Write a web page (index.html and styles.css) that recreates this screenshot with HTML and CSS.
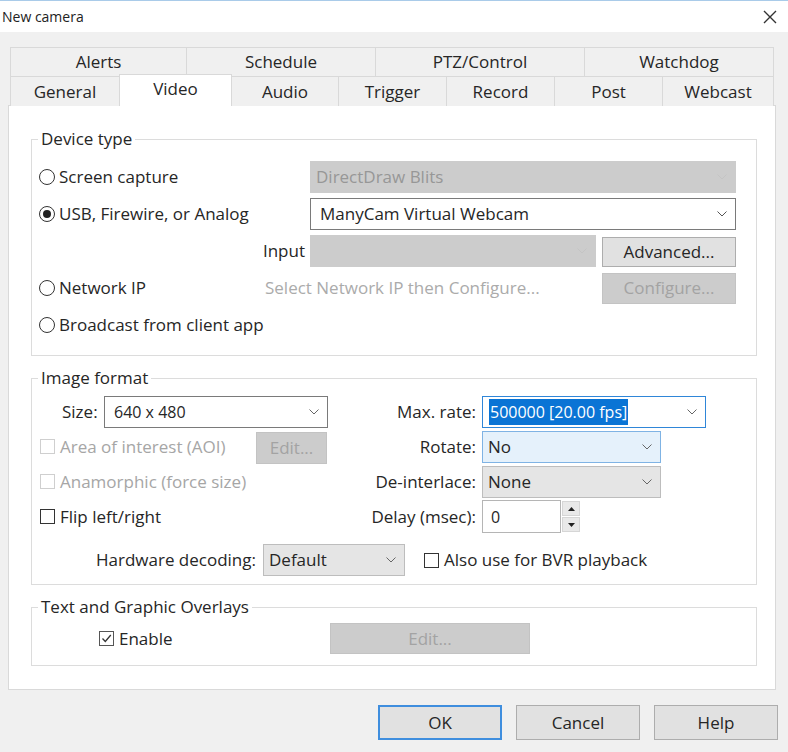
FILE: index.html
```html
<!DOCTYPE html>
<html>
<head>
<meta charset="utf-8">
<title>New camera</title>
<link rel="stylesheet" href="styles.css">
</head>
<body>
<div class="titlebar">
  <span class="title">New camera</span>
  <svg class="close" width="14" height="14" viewBox="0 0 14 14"><path d="M1 1L13 13M13 1L1 13" stroke="#333" stroke-width="1.4" fill="none"/></svg>
</div>
<div class="main">
  <div class="tabs">
    <div class="tabrow row1">
      <div class="tab">Alerts</div>
      <div class="tab">Schedule</div>
      <div class="tab">PTZ/Control</div>
      <div class="tab">Watchdog</div>
    </div>
    <div class="tabrow row2">
      <div class="tab">General</div>
      <div class="tab sel">Video</div>
      <div class="tab">Audio</div>
      <div class="tab">Trigger</div>
      <div class="tab">Record</div>
      <div class="tab">Post</div>
      <div class="tab">Webcast</div>
    </div>
  </div>
  <div class="panel">
    <fieldset class="group device">
      <legend>Device type</legend>
      <div class="devgrid">
        <label class="radio"><span class="rb"></span>Screen capture</label>
        <div class="combo off wide"><span class="ctext">DirectDraw Blits</span><svg class="chev" width="10" height="6" viewBox="0 0 10 6"><path d="M0.5 0.5L5 5L9.5 0.5" fill="none" stroke="#c4c4c4" stroke-width="1"/></svg></div>
        <label class="radio"><span class="rb on"></span>USB, Firewire, or Analog</label>
        <div class="combo edit wide"><span class="ctext">ManyCam Virtual Webcam</span><svg class="chev" width="10" height="6" viewBox="0 0 10 6"><path d="M0.5 0.5L5 5L9.5 0.5" fill="none" stroke="#555" stroke-width="1"/></svg></div>
        <span class="inlbl">Input</span>
        <div class="combo off incombo"><span class="ctext"></span><svg class="chev" width="10" height="6" viewBox="0 0 10 6"><path d="M0.5 0.5L5 5L9.5 0.5" fill="none" stroke="#c4c4c4" stroke-width="1"/></svg></div>
        <button class="btn adv">Advanced...</button>
        <label class="radio"><span class="rb"></span>Network IP</label>
        <span class="hint">Select Network IP then Configure...</span>
        <button class="btn off cfg">Configure...</button>
        <label class="radio"><span class="rb"></span>Broadcast from client app</label>
      </div>
    </fieldset>

    <fieldset class="group image">
      <legend>Image format</legend>
      <div class="imggrid">
        <div class="lrow sizerow">
          <span class="sizelbl">Size:</span>
          <div class="combo edit w224"><span class="ctext small">640 x 480</span><svg class="chev" width="10" height="6" viewBox="0 0 10 6"><path d="M0.5 0.5L5 5L9.5 0.5" fill="none" stroke="#666" stroke-width="1"/></svg></div>
        </div>
        <span class="rlbl">Max. rate:</span>
        <div class="rcell"><div class="combo focus w224"><span class="ctext small"><span class="hl">500000 [20.00 fps]</span></span><svg class="chev" width="10" height="6" viewBox="0 0 10 6"><path d="M0.5 0.5L5 5L9.5 0.5" fill="none" stroke="#666" stroke-width="1"/></svg></div></div>

        <div class="lrow">
          <label class="check off aoi"><span class="cb"></span>Area of interest (AOI)</label>
          <button class="btn off aoiedit">Edit...</button>
        </div>
        <span class="rlbl">Rotate:</span>
        <div class="rcell"><div class="combo hover w179"><span class="ctext">No</span><svg class="chev" width="10" height="6" viewBox="0 0 10 6"><path d="M0.5 0.5L5 5L9.5 0.5" fill="none" stroke="#666" stroke-width="1"/></svg></div></div>

        <div class="lrow">
          <label class="check off"><span class="cb"></span>Anamorphic (force size)</label>
        </div>
        <span class="rlbl">De-interlace:</span>
        <div class="rcell"><div class="combo list w179"><span class="ctext">None</span><svg class="chev" width="10" height="6" viewBox="0 0 10 6"><path d="M0.5 0.5L5 5L9.5 0.5" fill="none" stroke="#666" stroke-width="1"/></svg></div></div>

        <div class="lrow">
          <label class="check"><span class="cb"></span>Flip left/right</label>
        </div>
        <span class="rlbl">Delay (msec):</span>
        <div class="rcell">
          <div class="spin">
            <div class="spinfield"><span class="small">0</span></div>
            <div class="spinbtns">
              <div class="sb"><svg width="7" height="4" viewBox="0 0 7 4"><path d="M0 4L3.5 0L7 4Z" fill="#222"/></svg></div>
              <div class="sb"><svg width="7" height="4" viewBox="0 0 7 4"><path d="M0 0L3.5 4L7 0Z" fill="#222"/></svg></div>
            </div>
          </div>
        </div>

        <div class="hwrow">
          <span class="hwlbl">Hardware decoding:</span>
          <div class="combo list hwcombo"><span class="ctext">Default</span><svg class="chev" width="10" height="6" viewBox="0 0 10 6"><path d="M0.5 0.5L5 5L9.5 0.5" fill="none" stroke="#666" stroke-width="1"/></svg></div>
          <label class="check bvr"><span class="cb"></span>Also use for BVR playback</label>
        </div>
      </div>
    </fieldset>

    <fieldset class="group overlays">
      <legend>Text and Graphic Overlays</legend>
      <div class="ovrow">
        <label class="check enable"><span class="cb checked"><svg width="13" height="13" viewBox="0 0 13 13"><path d="M2.5 6.5L5.3 9.5L10.8 3" fill="none" stroke="#333" stroke-width="1.3"/></svg></span>Enable</label>
        <button class="btn off ovedit">Edit...</button>
      </div>
    </fieldset>
  </div>
  <div class="footer">
    <button class="btn dlg default">OK</button>
    <button class="btn dlg">Cancel</button>
    <button class="btn dlg">Help</button>
  </div>
</div>
</body>
</html>
```

FILE: styles.css
```css
* { box-sizing: border-box; }
html, body { margin: 0; padding: 0; }
body {
  width: 788px;
  height: 752px;
  overflow: hidden;
  background: #f0f0f0;
  font-family: "Open Sans", "Noto Sans", sans-serif;
  font-size: 17px;
  line-height: 20px;
  color: #262626;
}
button { font-family: inherit; font-size: inherit; line-height: inherit; color: inherit; padding: 0; margin: 0; }

/* title bar */
.titlebar {
  height: 32px;
  background: #fff;
  border-top: 1px solid #a9cbe9;
  display: flex;
  align-items: center;
  justify-content: space-between;
  padding: 0 11px 0 2px;
}
.title { font-size: 14px; color: #222; }
.close { display: block; }

/* main */
.main { padding: 15px 12px 0 8px; }

/* tabs */
.tabs { margin: 0 2px; }
.tabrow { display: grid; height: 29px; }
.row1 { grid-template-columns: 176px 189px 209px 190px; }
.row2 { grid-template-columns: 109px 112px 107px 108px 108px 108px 112px; }
.tab {
  border: 1px solid #d9d9d9;
  border-right: none;
  border-bottom: none;
  background: #f0f0f0;
  display: flex;
  align-items: center;
  justify-content: center;
  white-space: nowrap;
}
.tab:last-child { border-right: 1px solid #d9d9d9; }
.tab.sel {
  position: relative;
  z-index: 1;
  background: #fff;
  height: 32px;
  margin-top: -2px;
  padding-bottom: 4px;
  border-right: 1px solid #d9d9d9;
  margin-right: -1px;
}

/* panel */
.panel {
  background: #fff;
  border: 1px solid #d9d9d9;
  padding: 23px 18px 23px 22px;
}

fieldset.group {
  margin: 0 0 12px;
  border: 1px solid #dcdcdc;
  min-width: 0;
  padding: 12px 19px 14px 6px;
}
fieldset.group:last-child { margin-bottom: 0; }
legend { padding: 0 3px; line-height: 20px; }

/* controls */
.combo {
  height: 32px;
  display: flex;
  align-items: center;
  justify-content: space-between;
  border: 1px solid #7a7a7a;
  background: #fff;
  padding: 0 8px 0 9px;
  white-space: nowrap;
}
.combo .chev { flex: none; display: block; }
.combo.off { background: #cccccc; border-color: #cccccc; color: #979797; padding-left: 5px; }
.combo.edit { border-color: #7a7a7a; }
.combo.focus { border-color: #2f86d8; padding-left: 6px; }
.combo.hover { background: #e5f1fb; border-color: #7fb3e4; padding-left: 5px; }
.combo.list { background: #e5e5e5; border-color: #bdbdbd; padding-left: 5px; }
.small { font-size: 16px; }
.hl { background: #0a74d5; color: #fff; padding: 2px 1px; }

.btn {
  height: 31px;
  background: #e1e1e1;
  border: 1px solid #adadad;
  display: flex;
  align-items: center;
  justify-content: center;
}
.btn.off { background: #cccccc; border-color: #c3c3c3; color: #a3a3a3; }

.radio, .check {
  display: flex;
  align-items: center;
  white-space: nowrap;
}
.rb {
  flex: none;
  width: 16px;
  height: 16px;
  border: 1px solid #333;
  border-radius: 50%;
  margin: 0 4px 0 1px;
  display: flex;
  align-items: center;
  justify-content: center;
  background: #fff;
}
.rb.on::after {
  content: "";
  width: 8px;
  height: 8px;
  border-radius: 50%;
  background: #222;
}
.cb {
  width: 15px;
  height: 15px;
  border: 1px solid #333;
  background: #fff;
  margin: 0 5px 0 2px;
  flex: none;
  display: flex;
  align-items: center;
  justify-content: center;
}
.check.off { color: #a6a6a6; }
.check.off .cb { border-color: #cfcfcf; }

/* device type grid */
.devgrid {
  display: grid;
  grid-template-columns: 222px 50px 292px 134px;
  grid-auto-rows: 32px;
  row-gap: 5px;
  align-items: center;
}
.devgrid .radio { grid-column: 1; }
.combo.wide { grid-column: 3 / 5; }
.inlbl { grid-column: 2; text-align: right; padding-right: 5px; }
.incombo { grid-column: 3; width: 286px; }
.adv { grid-column: 4; height: 30px; margin-top: 2px; }
.hint { grid-column: 2 / 4; padding-left: 5px; color: #ababab; white-space: nowrap; }
.cfg { grid-column: 4; }

/* image format */
fieldset.image { padding-top: 6px; padding-bottom: 8px; }
.imggrid {
  display: grid;
  grid-template-columns: 322px 122px 1fr;
  grid-template-rows: 35px 35px 35px 35px 42px;
  align-items: center;
}
.lrow { display: flex; align-items: center; }
.sizerow { padding-left: 24px; }
.sizelbl { width: 37px; margin-right: 5px; }
.w224 { width: 224px; }
.w179 { width: 179px; }
.rlbl { text-align: right; padding-right: 6px; white-space: nowrap; }
.rcell { display: flex; }
.aoi { width: 218px; }
.aoiedit { width: 71px; height: 32px; margin-top: 2px; }

.spin { display: flex; height: 33px; }
.spinfield {
  width: 79px;
  border: 1px solid #b5b5b5;
  background: #fff;
  display: flex;
  align-items: center;
  padding-left: 8px;
}
.spinbtns { width: 19px; display: flex; flex-direction: column; gap: 1px; padding: 1px 0 1px 1px; }
.sb {
  flex: 1;
  background: #e9e9e9;
  border: 1px solid #d6d6d6;
  display: flex;
  align-items: center;
  justify-content: center;
}
.sb svg { display: block; }

.hwrow {
  grid-column: 1 / 4;
  align-self: end;
  height: 32px;
  display: flex;
  align-items: center;
  padding-left: 58px;
}
.hwlbl { margin-right: 7px; white-space: nowrap; }
.hwcombo { width: 142px; border-color: #c6c6c6; background: #e1e1e1; }
.bvr { margin-left: 17px; }

/* overlays */
fieldset.overlays { padding-top: 5px; padding-bottom: 10px; }
.ovrow {
  display: grid;
  grid-template-columns: 292px 200px;
  height: 33px;
  align-items: center;
}
.enable { padding-left: 59px; }
.cb.checked { border-color: #555; }
.cb.checked svg { display: block; }
.ovedit { height: 31px; }

/* footer buttons */
.footer {
  display: flex;
  justify-content: flex-end;
  gap: 14px;
  padding: 15px 10px 0 0;
  margin-right: -12px;
}
.btn.dlg { width: 124px; height: 35px; }
.btn.default { border: 2px solid #3f8ede; }
```
